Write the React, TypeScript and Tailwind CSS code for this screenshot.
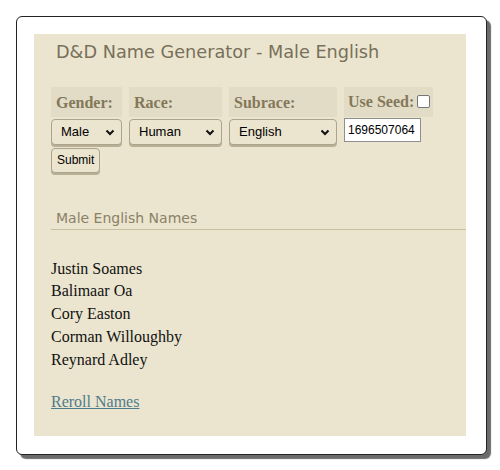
import { useState } from "react";

const names = ["Justin Soames", "Balimaar Oa", "Cory Easton", "Corman Willoughby", "Reynard Adley"];

function Chevron() {
  return (
    <svg width="10" height="7" viewBox="0 0 10 7" className="pointer-events-none absolute right-[7px] top-[11px]">
      <path d="M1.5 1.5 L5 5 L8.5 1.5" fill="none" stroke="#111" strokeWidth="2" />
    </svg>
  );
}

function Field({ label, width, value, options }: { label: string; width: number; value: string; options: string[] }) {
  return (
    <div className="flex flex-col" style={{ width }}>
      <div className="h-[30px] bg-[#e2dcc6] px-[5px] pt-[4px] text-[16px] font-bold text-[#84785a] font-['Liberation_Serif',serif]">{label}</div>
      <div className="relative mt-[1px] h-[28px]">
        <select
          defaultValue={value}
          className="h-[26px] w-full appearance-none rounded-[4px] border border-[#aba38d] bg-[#ebe5d0] pl-[9px] text-[13px] text-black shadow-[0_2px_0_#b9af95] font-['Liberation_Sans',Arial,sans-serif] outline-none"
        >
          {options.map((o) => (
            <option key={o}>{o}</option>
          ))}
        </select>
        <Chevron />
      </div>
    </div>
  );
}

export default function App() {
  const [seed, setSeed] = useState("1696507064");

  return (
    <div className="h-[470px] w-[500px] bg-white pl-[16px] pt-[16px]">
      <div className="h-[439px] w-[471px] rounded-[6px] border border-[#222] bg-white p-[17px] shadow-[4px_4px_1px_#6b6b6b]">
        <div className="h-[402px] w-[432px] bg-[#ebe5cf] pl-[17px] pt-[6px]">
          <h1 className="pl-[5px] text-[17.7px] leading-[24px] text-[#78705a] font-['DejaVu_Sans',Verdana,sans-serif]">
            D&amp;D Name Generator - Male English
          </h1>

          {/* form */}
          <div className="mt-[23px] flex gap-[7px]">
            <Field label="Gender:" width={71} value="Male" options={["Male", "Female"]} />
            <Field label="Race:" width={93} value="Human" options={["Human", "Elf", "Dwarf"]} />
            <Field label="Subrace:" width={108} value="English" options={["English", "French"]} />
            <div className="flex flex-col">
              <div className="flex h-[30px] items-center gap-[3px] bg-[#e2dcc6] pl-[4px] pr-[3px] pb-[1px] text-[16px] font-bold text-[#84785a] font-['Liberation_Serif',serif]">
                Use Seed:
                <span className="h-[13px] w-[13px] rounded-[2px] border border-[#767676] bg-white" />
              </div>
              <input
                value={seed}
                onChange={(e) => setSeed(e.target.value)}
                className="mt-[1px] h-[24px] w-[77px] border border-[#8f8f8f] bg-white px-[3px] text-[12px] text-black font-['Liberation_Sans',Arial,sans-serif] outline-none"
              />
            </div>
          </div>
          <button className="mt-[1px] h-[25px] rounded-[4px] border border-[#aba38d] bg-[#ebe5d0] px-[5px] text-[12px] text-black shadow-[0_2px_0_#b9af95] font-['Liberation_Sans',Arial,sans-serif]">
            Submit
          </button>

          {/* results */}
          <div className="mt-[35px] border-b border-[#c8bf9f] pb-[1px] pl-[5px] text-[14px] leading-[20px] text-[#8a8166] font-['DejaVu_Sans',Verdana,sans-serif]">
            Male English Names
          </div>
          <ul className="mt-[28px] text-[16px] leading-[22.8px] text-[#111] font-['Liberation_Serif',serif]">
            {names.map((n) => (
              <li key={n}>{n}</li>
            ))}
          </ul>
          <a href="#" className="mt-[20px] block text-[16px] leading-[22px] text-[#4f7b8b] underline font-['Liberation_Serif',serif]">
            Reroll Names
          </a>
        </div>
      </div>
    </div>
  );
}
